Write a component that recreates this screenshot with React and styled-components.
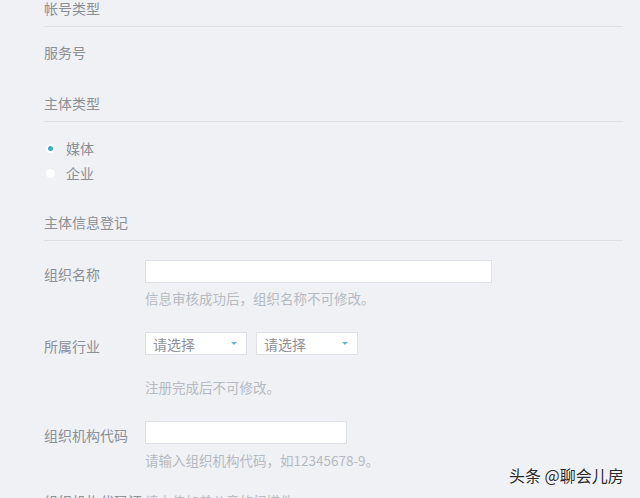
import React from 'react'
import styled, { createGlobalStyle } from 'styled-components'

const GlobalStyle = createGlobalStyle`
  html, body {
    margin: 0;
    padding: 0;
    background: #eff1f5;
    overflow: hidden;
  }
  body {
    font-family: "Noto Sans CJK SC", "Noto Sans", sans-serif;
  }
`

const Page = styled.div`
  position: relative;
  width: 640px;
  height: 498px;
  overflow: hidden;
  background: #eff1f5;
`

const Content = styled.div`
  display: flex;
  flex-direction: column;
  padding: 0 17px 0 44px;
  margin-top: -2px;
`

const Heading = styled.div`
  font-size: 14px;
  line-height: 20px;
  color: #8b8f96;
  padding-bottom: 8px;
  border-bottom: 1px solid #dcdfe5;
  margin-top: ${p => p.top || 0}px;
`

const Plain = styled.div`
  font-size: 14px;
  line-height: 20px;
  color: #8b8f96;
  margin-top: 15px;
`

const RadioGroup = styled.div`
  display: flex;
  flex-direction: column;
  gap: 5px;
  margin-top: 16px;
`

const RadioRow = styled.label`
  display: flex;
  align-items: center;
  gap: 11px;
  height: 20px;
  font-size: 14px;
  color: #8b8f96;
  padding-left: 2px;
`

const RadioDot = styled.span`
  width: 9px;
  height: 9px;
  border-radius: 50%;
  background: #fff;
  display: flex;
  align-items: center;
  justify-content: center;
  &::after {
    content: '';
    width: 5px;
    height: 5px;
    border-radius: 50%;
    background: ${p => (p.checked ? '#3aaec3' : 'transparent')};
  }
`

const FormRow = styled.div`
  display: flex;
  align-items: flex-start;
  margin-top: ${p => p.top}px;
`

const Label = styled.div`
  width: 101px;
  flex-shrink: 0;
  padding-top: ${p => (p.flat ? 0 : 4)}px;
  font-size: 14px;
  line-height: 20px;
  color: #8b8f96;
  white-space: nowrap;
  overflow: hidden;
`

const Field = styled.div`
  display: flex;
  flex-direction: column;
`

const TextInput = styled.div`
  width: ${p => p.width}px;
  height: 23px;
  box-sizing: border-box;
  background: #fff;
  border: 1px solid #dde0e6;
`

const Hint = styled.div`
  font-size: 13.5px;
  line-height: 20px;
  color: #b6bac2;
  margin-top: ${p => p.top}px;
  white-space: nowrap;
`

const SelectRow = styled.div`
  display: flex;
  gap: 9px;
`

const Select = styled.div`
  width: 102px;
  height: 23px;
  box-sizing: border-box;
  background: #fff;
  border: 1px solid #dde0e6;
  display: flex;
  align-items: center;
  justify-content: space-between;
  padding: 0 9px 0 7px;
  font-size: 14px;
  color: #8e9298;
`

const Caret = styled.span`
  width: 0;
  height: 0;
  border-left: 3px solid transparent;
  border-right: 3px solid transparent;
  border-top: 3px solid #62b9cb;
`

const Watermark = styled.div`
  position: absolute;
  left: 509px;
  top: 464px;
  font-size: 16px;
  line-height: 22px;
  color: #2a2a2a;
  white-space: nowrap;
  text-shadow: 0 0 2px #fff, 0 0 1px #fff;
`

function Radio({ checked, children }) {
  return (
    <RadioRow>
      <RadioDot checked={checked} />
      {children}
    </RadioRow>
  )
}

export default function App() {
  return (
    <Page>
      <GlobalStyle />
      <Content>
        <Heading>帐号类型</Heading>
        <Plain>服务号</Plain>

        <Heading top={31}>主体类型</Heading>
        <RadioGroup>
          <Radio checked>媒体</Radio>
          <Radio>企业</Radio>
        </RadioGroup>

        <Heading top={29}>主体信息登记</Heading>

        <FormRow top={19}>
          <Label>组织名称</Label>
          <Field>
            <TextInput width={347} />
            <Hint top={5}>信息审核成功后，组织名称不可修改。</Hint>
          </Field>
        </FormRow>

        <FormRow top={24}>
          <Label>所属行业</Label>
          <Field>
            <SelectRow>
              <Select>请选择<Caret /></Select>
              <Select>请选择<Caret /></Select>
            </SelectRow>
            <Hint top={22}>注册完成后不可修改。</Hint>
          </Field>
        </FormRow>

        <FormRow top={24}>
          <Label>组织机构代码</Label>
          <Field>
            <TextInput width={202} />
            <Hint top={6}>请输入组织机构代码，如12345678-9。</Hint>
          </Field>
        </FormRow>

        <FormRow top={21}>
          <Label flat>组织机构代码证</Label>
          <Field>
            <Hint top={0}>请上传加盖公章的扫描件</Hint>
          </Field>
        </FormRow>
      </Content>
      <Watermark>头条 @聊会儿房</Watermark>
    </Page>
  )
}
